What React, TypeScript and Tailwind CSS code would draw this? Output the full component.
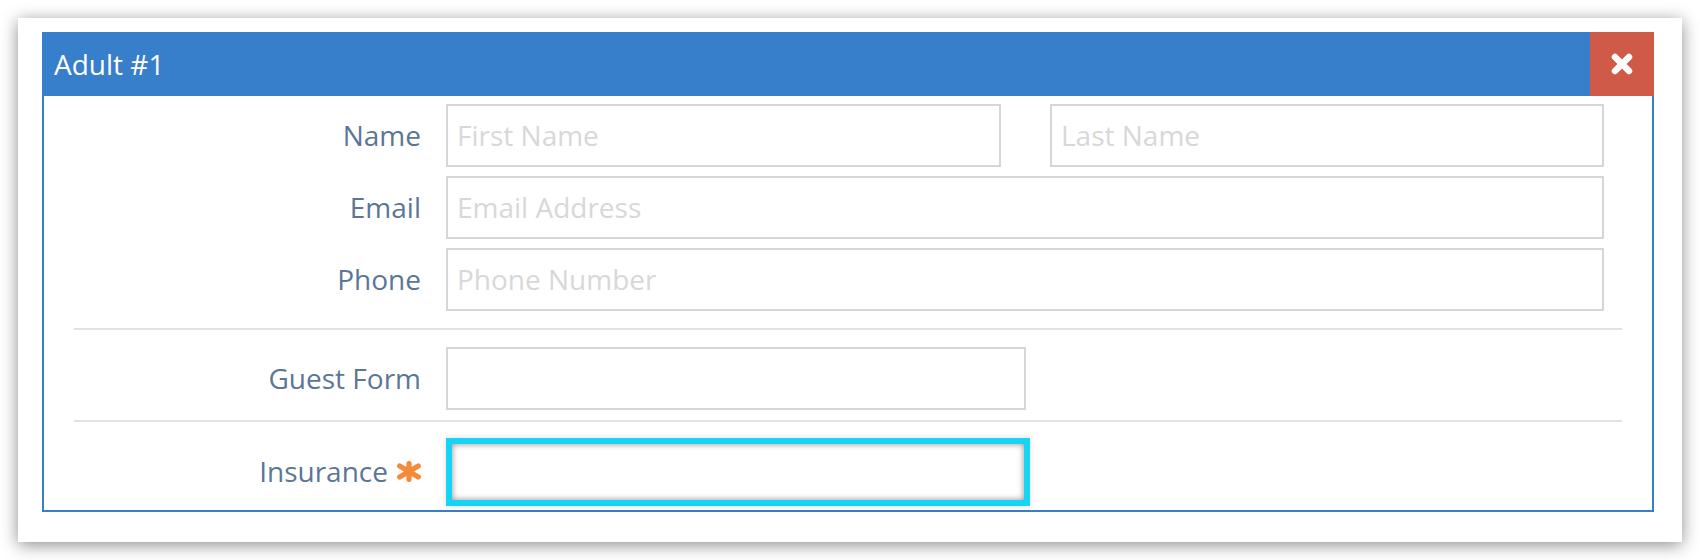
import React from "react";

const font = { fontFamily: '"Open Sans", "Noto Sans", Arial, sans-serif' };

function Label({ children }: { children: React.ReactNode }) {
  return (
    <div className="flex w-[377px] shrink-0 items-center justify-end pb-[2px] text-[28px] text-[#5c7696]">
      {children}
    </div>
  );
}

function Field({ placeholder, className = "" }: { placeholder?: string; className?: string }) {
  return (
    <div
      className={
        "flex h-[63px] items-center border-2 border-[#d6d6d6] bg-white px-[9px] pb-[2px] text-[28px] text-[#d8d8d8] " +
        className
      }
    >
      {placeholder}
    </div>
  );
}

function Separator({ className = "" }: { className?: string }) {
  return <div className={"mx-[30px] h-[2px] bg-[#e3e3e3] " + className} />;
}

export default function App() {
  return (
    <div className="h-[560px] w-[1700px] bg-white pl-[18px] pt-[18px]" style={font}>
      <div className="h-[524px] w-[1664px] bg-white pl-[24px] pt-[14px] shadow-[0_3px_16px_rgba(0,0,0,0.45)]">
        <div className="flex w-[1612px] flex-col">
          {/* Header */}
          <div className="flex h-[64px] items-stretch bg-[#377ecb]">
            <div className="flex flex-1 items-center pl-[12px] text-[28px] text-white">Adult #1</div>
            <div className="flex w-[64px] items-center justify-center bg-[#d05a48]">
              <svg width="22" height="22" viewBox="0 0 22 22">
                <path
                  d="M4 4 L18 18 M18 4 L4 18"
                  stroke="#ffffff"
                  strokeWidth="6.5"
                  strokeLinecap="round"
                  fill="none"
                />
              </svg>
            </div>
          </div>

          {/* Body */}
          <div className="flex flex-col border-x-2 border-b-2 border-[#377ecb] pb-[4px] pt-[8px]">
            <div className="flex flex-col gap-[9px]">
              <div className="flex gap-[25px]">
                <Label>Name</Label>
                <div className="flex w-[1158px] gap-[49px]">
                  <Field placeholder="First Name" className="w-[555px]" />
                  <Field placeholder="Last Name" className="w-[554px]" />
                </div>
              </div>
              <div className="flex gap-[25px]">
                <Label>Email</Label>
                <Field placeholder="Email Address" className="w-[1158px]" />
              </div>
              <div className="flex gap-[25px]">
                <Label>Phone</Label>
                <Field placeholder="Phone Number" className="w-[1158px]" />
              </div>
            </div>

            <Separator className="mb-[17px] mt-[17px]" />

            <div className="flex gap-[25px]">
              <Label>Guest Form</Label>
              <Field className="w-[580px]" />
            </div>

            <Separator className="mb-[16px] mt-[10px]" />

            <div className="flex gap-[25px]">
              <Label>
                <span>Insurance</span>
                <svg width="24" height="21" viewBox="0 0 24 21" className="ml-[9px]">
                  <path
                    d="M12 2.7 L12 18.3 M2.7 5 L21.3 16 M21.3 5 L2.7 16"
                    stroke="#f6893a"
                    strokeWidth="5.2"
                    strokeLinecap="round"
                    fill="none"
                  />
                  <circle cx="12" cy="10.5" r="4" fill="#f6893a" />
                </svg>
              </Label>
              <div className="h-[68px] w-[584px] border-[6px] border-[#17d3f6] bg-white shadow-[inset_0_0_6px_rgba(0,0,0,0.45),0_0_6px_rgba(0,0,0,0.15)]" />
            </div>
          </div>
        </div>
      </div>
    </div>
  );
}
